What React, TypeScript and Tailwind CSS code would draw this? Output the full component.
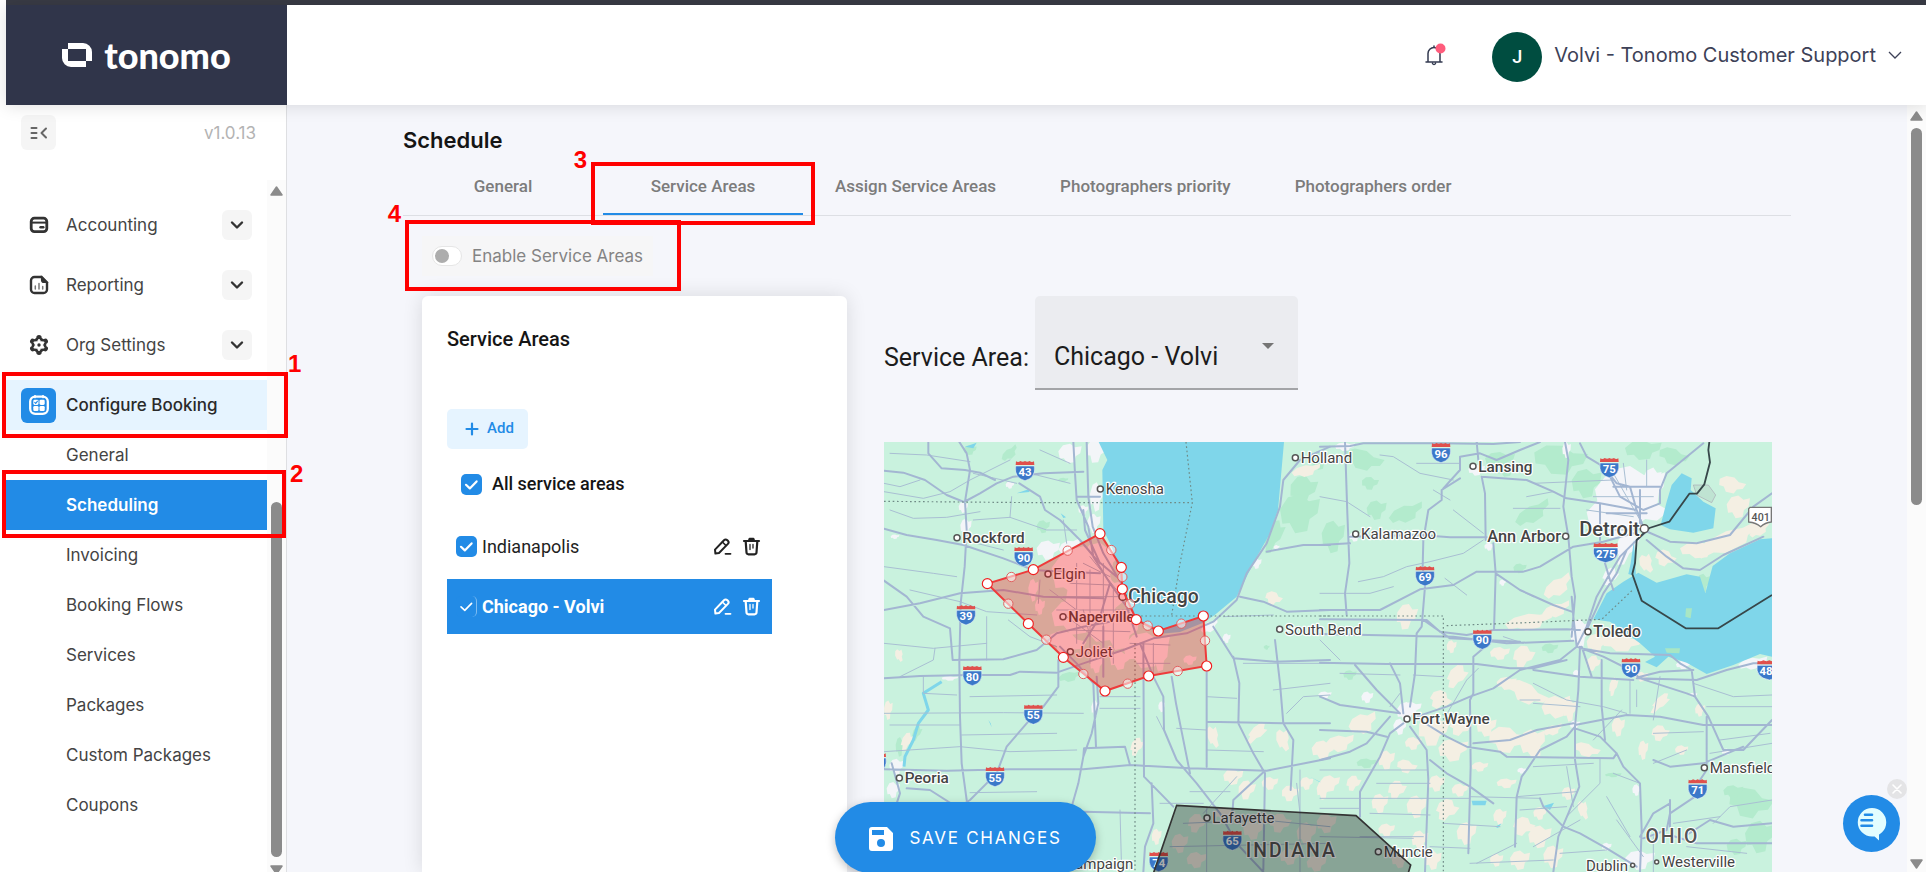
import React from "react";

const INTER = "font-['Inter',sans-serif]";

function Callout({ label, box, tag }: { label: string; box: string; tag: string }) {
  return (
    <span className={`pointer-events-none absolute z-30 border-4 border-[#ff0000] ${box}`}>
      <span className={`absolute font-['Liberation_Sans',sans-serif] text-2xl leading-6 font-bold text-[#ff0000] ${tag}`}>{label}</span>
    </span>
  );
}

function Tick({ id, checked, outline }: { id: string; checked?: boolean; outline?: boolean }) {
  return (
    <span className="grid size-[21px] shrink-0">
      <input
        id={id}
        type="checkbox"
        defaultChecked={checked}
        className={
          outline
            ? "col-start-1 row-start-1 size-[21px] appearance-none rounded-[5px] border-r border-[#7dbcf2] bg-[#228be6]"
            : "col-start-1 row-start-1 size-[21px] appearance-none rounded-[5px] bg-[#228be6]"
        }
      />
      <svg viewBox="0 0 21 21" className="pointer-events-none col-start-1 row-start-1 size-[21px]" fill="none" stroke="#fff" strokeWidth={outline ? 1.6 : 2.2} strokeLinecap="round" strokeLinejoin="round">
        <path d="M5 10.8 8.8 14.4 15.6 7.4" />
      </svg>
    </span>
  );
}

function AccountingIcon() {
  return (
    <svg viewBox="0 0 20 20" className="size-5" fill="none" stroke="#333" strokeWidth="2.800">
      <rect x="2.200" y="3.200" width="15.600" height="13.400" rx="3.200" />
      <path d="M2 7.600h16" strokeWidth="2" />
      <path d="M11.500 12.300h2.800" strokeWidth="2.400" strokeLinecap="round" />
    </svg>
  );
}

function ReportingIcon() {
  return (
    <svg viewBox="0 0 20 20" className="size-5" fill="none" stroke="#333" strokeWidth="2.400" strokeLinecap="round">
      <path d="M12.600 2H5.500A3.500 3.500 0 0 0 2 5.500v9A3.500 3.500 0 0 0 5.500 18h9a3.500 3.500 0 0 0 3.500-3.500V7.400Z" />
      <path d="M12.600 2v3a2.400 2.400 0 0 0 2.400 2.400h3L12.600 2Z" fill="#333" strokeWidth="1.400" />
      <path d="M6.300 14v-3M10 14V8.500M13.700 14v-2.500" strokeWidth="1.500" stroke="#777" />
    </svg>
  );
}

function SettingsIcon() {
  return (
    <svg viewBox="0 0 20 20" className="size-5" fill="#333">
      <circle cx="10" cy="10" r="7.400" />
      {[0, 60, 120, 180, 240, 300].map((a) => (
        <circle key={a} cx="10" cy="2.800" r="2.700" transform={`rotate(${a} 10 10)`} />
      ))}
      <path d="M10 4 11.800 6.700 15.200 7 13.700 10 15.200 13 11.800 13.300 10 16 8.200 13.300 4.800 13 6.300 10 4.800 7 8.200 6.700Z" fill="#fff" stroke="#fff" strokeWidth=".8" strokeLinejoin="round" />
      <circle cx="10" cy="10" r="1.700" />
    </svg>
  );
}

function BookingIcon() {
  return (
    <svg viewBox="0 0 20 20" className="size-5">
      <rect x="1.200" y="1.600" width="17.600" height="17.200" rx="5" fill="none" stroke="#fff" strokeWidth="2.300" />
      <path d="M6 .6v2M14 .6v2" stroke="#fff" strokeWidth="1.600" strokeLinecap="round" />
      <g fill="#fff">
        <rect x="4.300" y="4.700" width="5.200" height="5.200" rx="1.300" />
        <rect x="10.500" y="4.700" width="5.200" height="5.200" rx="1.300" />
        <rect x="4.300" y="10.900" width="5.200" height="5.200" rx="1.300" />
        <rect x="10.500" y="10.900" width="5.200" height="5.200" rx="1.300" />
      </g>
      <path d="m5.400 7.200 1.300 1.200 2-2.600" fill="none" stroke="#228be6" strokeWidth="1.100" />
    </svg>
  );
}

function Caret({ up }: { up?: boolean }) {
  return (
    <svg viewBox="0 0 13 10" className="h-2.5 w-[13px] shrink-0" fill="#8b8b8b" stroke="#8b8b8b" strokeWidth="1.500" strokeLinejoin="round">
      <path d={up ? "M6.500 1 12 9H1Z" : "M6.500 9 12 1H1Z"} />
    </svg>
  );
}

const sections = [
  { name: "Accounting", icon: <AccountingIcon /> },
  { name: "Reporting", icon: <ReportingIcon /> },
  { name: "Org Settings", icon: <SettingsIcon /> },
];
const bookingPages = ["General", "Scheduling", "Invoicing", "Booking Flows", "Services", "Packages", "Custom Packages", "Coupons"];

function Sidebar() {
  return (
    <aside className={`relative z-10 flex w-[281px] shrink-0 flex-col border-r border-[#dedfe2] bg-white text-[17px] text-[#444] ${INTER}`}>
      <div className="flex h-[75px] shrink-0 items-start justify-between pt-2.5 pr-[30px] pl-[15px]">
        <button aria-label="Collapse menu" className="grid size-[35px] place-items-center rounded-md bg-[#f5f5f5]">
          <svg viewBox="0 0 18 14" className="h-3.5 w-[18px]" fill="none" stroke="#666" strokeWidth="2" strokeLinecap="round" strokeLinejoin="round">
            <path d="M1.500 2h5M1.500 7h5M1.500 12h5M16 2.500 11.500 7 16 11.500" />
          </svg>
        </button>
        <span className="leading-9 text-[#b3b3b3]">v1.0.13</span>
      </div>
      <div className="flex min-h-0 flex-1">
        <nav className="flex flex-1 flex-col pt-5">
          {sections.map((s) => (
            <div key={s.name} className="mb-2.5 flex h-[50px] shrink-0 items-center pr-[15px] pl-[15px]">
              <a href="#" className="flex flex-1 items-center gap-2.5">
                <span className="grid size-[35px] place-items-center">{s.icon}</span>
                <span className="pt-0.5">{s.name}</span>
              </a>
              <button aria-label={`Expand ${s.name}`} className="grid size-[30px] place-items-center rounded-md bg-[#f5f5f5]">
                <svg viewBox="0 0 14 10" className="h-2.5 w-3.5" fill="none" stroke="#333" strokeWidth="2.400" strokeLinecap="round" strokeLinejoin="round">
                  <path d="m2 2.500 5 5 5-5" />
                </svg>
              </button>
            </div>
          ))}
          <a href="#" className="relative flex h-[50px] shrink-0 items-center gap-2.5 bg-[#e6f4ff] pl-[15px] font-medium text-[#2a2a2a]">
            <span className="grid size-[35px] place-items-center rounded-md bg-[#228be6]"><BookingIcon /></span>
            <span className="pt-0.5">Configure Booking</span>
            <Callout label="1" box="-left-1 -right-[21px] -top-2 -bottom-2" tag="left-full -top-6 ml-1" />
          </a>
          {bookingPages.map((p) =>
            p === "Scheduling" ? (
              <a key={p} href="#" className="relative flex h-[50px] shrink-0 items-center bg-[#228be6] pt-0.5 pl-[60px] font-semibold text-white">
                {p}
                <Callout label="2" box="-left-1 -right-[19px] -top-2.5 -bottom-2" tag="left-full -top-3 ml-2" />
              </a>
            ) : (
              <a key={p} href="#" className="flex h-[50px] shrink-0 items-center pt-0.5 pl-[60px]">{p}</a>
            )
          )}
        </nav>
        <div aria-hidden className="flex w-[19px] flex-col items-center bg-[#fbfbfb] pt-1.5">
          <Caret up />
          <div className="min-h-0 flex-[306]" />
          <div className="min-h-0 w-[11px] flex-[355] rounded-full bg-[#8b8b8b]" />
          <div className="h-2 shrink-0" />
          <div className="h-[7px] shrink-0 overflow-hidden"><Caret /></div>
        </div>
      </div>
    </aside>
  );
}

function Header() {
  return (
    <header className={`relative z-20 flex h-[100px] shrink-0 items-center bg-white shadow-[0_1px_16px_rgba(0,0,0,0.13)] ${INTER}`}>
      <a href="#" className="flex h-full w-[281px] shrink-0 items-center justify-center gap-3 bg-[#30354a] text-white">
        <svg viewBox="0 0 30 24" className="h-6 w-[30px]" fill="#fff">
          <path d="M6 0h15a9 9 0 0 1 9 9v9h-6V6H6Z" />
          <path d="M0 6h6v12h18v6H9a9 9 0 0 1-9-9Z" />
        </svg>
        <span className="font-['Lato',sans-serif] text-4xl leading-10 font-black">tonomo</span>
      </a>
      <div className="flex flex-1 items-center justify-end pr-6">
        <button aria-label="Notifications" className="mr-[46px]">
          <svg viewBox="0 0 22 24" className="h-6 w-[22px]" fill="none" stroke="#333a50" strokeWidth="1.500" strokeLinejoin="round" strokeLinecap="round">
            <path d="M2 19h16M4 19v-8.500a6 6 0 0 1 12 0V19M10 4.500V3M8.500 20.500a1.700 1.700 0 0 0 3 0" />
            <circle cx="16.500" cy="5.500" r="5" fill="#ff5c7c" stroke="none" />
          </svg>
        </button>
        <button className="flex items-center gap-3 text-xl text-[#3d4157]">
          <span className="mt-1 grid size-[50px] place-items-center rounded-full bg-[#004d40] font-['Roboto',sans-serif] text-lg font-medium text-white">J</span>
          Volvi - Tonomo Customer Support
          <svg viewBox="0 0 14 10" className="h-2.5 w-3.5" fill="none" stroke="#3d4157" strokeWidth="1.300">
            <path d="m1 2 6 6 6-6" />
          </svg>
        </button>
      </div>
    </header>
  );
}

function RowIcons({ area }: { area: string }) {
  return (
    <span className="ml-auto flex items-center gap-2.5 pr-[11px]">
      <button aria-label={`Edit ${area}`}>
        <svg viewBox="0 0 19 19" className="size-[19px]" fill="none" stroke="currentColor" strokeWidth="2" strokeLinejoin="round" strokeLinecap="round">
          <path d="M2 12.600 11 3.200a2.300 2.300 0 0 1 3.300 0l.6.6a2.200 2.200 0 0 1 0 3.100L6 16l-3.600.6Z" />
          <path d="m9.400 5 3.400 3.400" strokeWidth="1.500" />
          <path d="M12.500 16.800h5" strokeWidth="1.800" />
        </svg>
      </button>
      <button aria-label={`Delete ${area}`}>
        <svg viewBox="0 0 19 19" className="size-[19px]" fill="none" stroke="currentColor" strokeWidth="2.200" strokeLinejoin="round" strokeLinecap="round">
          <path d="M2 4h15M7 3.500 7.600 1.800h3.800l.6 1.700M3.700 4.500l.8 11a2 2 0 0 0 2 1.800h6a2 2 0 0 0 2-1.800l.8-11" />
          <path d="M8 7.500v5M11 7.500v3.500" strokeWidth="1.300" />
        </svg>
      </button>
    </span>
  );
}

/* ---- map ---- */

const BLOB = "M-50 -10-30-40 0-48 22-30 50-36 44 0 24 14 18 44-12 50-26 24-44 26Z";
// x, y, width, height, rotation
type Blob = [number, number, number, number, number];
const eastSand: Blob[] = [
  [1235, 165, 80, 50, 20], [1255, 230, 70, 70, 0], [1230, 330, 230, 60, -24], [1140, 360, 120, 50, 0], [980, 400, 40, 60, -30], [1035, 385, 60, 50, 30], [1320, 300, 70, 30, -30],
  [715, 470, 100, 50, -35], [260, 560, 60, 80, 10], [630, 575, 150, 50, -10], [710, 540, 90, 40, -20], [905, 640, 120, 50, 5], [395, 650, 30, 40, 0], [830, 640, 60, 60, 0],
  [610, 680, 60, 70, 20], [540, 670, 60, 40, 0], [410, 740, 50, 80, 30], [360, 810, 60, 60, 40], [620, 790, 130, 60, 30], [710, 830, 90, 70, -10], [560, 760, 60, 40, 0], [820, 700, 40, 50, 20],
  [880, 770, 24, 60, 10], [895, 890, 40, 60, 0], [965, 740, 40, 30, 0], [1020, 820, 30, 80, 40], [130, 880, 90, 60, -20], [60, 940, 90, 50, -10], [340, 900, 90, 100, 10], [400, 960, 90, 70, 0], [500, 890, 60, 60, 0],
  [560, 930, 110, 80, 15], [640, 940, 80, 90, -10], [420, 890, 60, 60, 30], [200, 990, 50, 60, 0], [260, 1010, 60, 40, 20], [280, 940, 50, 40, 0], [700, 900, 60, 30, -20], [750, 840, 40, 70, 0], [800, 960, 80, 40, 20],
  [970, 960, 30, 60, 0], [1085, 960, 40, 30, 0], [1020, 910, 50, 50, 20], [30, 1060, 60, 50, 0], [100, 1060, 40, 50, 20], [180, 1120, 50, 60, 0], [230, 1080, 50, 60, 20], [290, 1130, 60, 70, 0], [350, 1060, 50, 50, 0],
  [380, 1140, 60, 70, 30], [440, 1210, 60, 70, 0], [300, 1230, 50, 60, 0], [200, 1200, 50, 40, 0], [240, 1290, 50, 50, 0], [340, 1290, 50, 60, 0], [420, 1080, 50, 40, 0], [540, 1160, 40, 50, 0], [610, 1190, 60, 60, 30],
  [660, 1220, 70, 70, 0], [700, 1280, 60, 70, 0], [600, 1290, 60, 60, 0], [790, 1140, 30, 60, -20], [745, 1090, 40, 40, 0], [530, 1290, 40, 40, 0], [660, 1150, 40, 40, 0], [1140, 840, 30, 40, 0], [480, 1010, 50, 30, 0], [560, 1060, 60, 30, 0],
];
const westSand: Blob[] = [
  [1310, 122, 90, 34, -12], [88, 676, 24, 40, -20], [55, 840, 26, 60, 0], [110, 935, 30, 60, 20], [1210, 505, 50, 40, 30], [1030, 920, 34, 70, -20], [800, 950, 34, 60, 20], [1160, 910, 36, 80, 40], [1240, 930, 40, 70, -20],
  [1360, 960, 70, 60, 0], [1090, 1040, 60, 50, 0], [1130, 1080, 50, 60, 10], [1200, 1060, 50, 40, 0], [1260, 1090, 50, 50, 10], [1310, 1060, 40, 40, 0], [1360, 1080, 40, 60, 0], [980, 1180, 50, 60, 20], [930, 1240, 50, 60, 0],
  [1060, 1150, 50, 40, 0], [1150, 1200, 60, 60, 0], [1230, 1180, 60, 60, 20], [1310, 1210, 60, 70, 0], [1370, 1180, 60, 60, 0], [980, 1290, 60, 50, 0], [1260, 1280, 60, 50, 0], [1340, 1300, 60, 50, 0], [860, 1220, 30, 50, 0],
];
const eastWoods: Blob[] = [
  [130, 90, 120, 60, 20], [150, 160, 50, 40, 10], [260, 250, 110, 50, -20], [40, 320, 70, 100, 0], [170, 240, 60, 60, 0], [640, 250, 120, 50, -30], [720, 90, 160, 90, 10], [540, 90, 90, 50, 0], [800, 160, 90, 90, 0], [600, 415, 40, 30, 0],
  [90, 735, 40, 30, 0], [690, 655, 50, 30, 0], [560, 120, 60, 40, 0], [970, 60, 110, 60, 0], [1060, 80, 90, 50, 20], [1290, 1120, 130, 90, 20], [1240, 1085, 60, 40, 0], [1320, 1220, 90, 100, 0], [1250, 1250, 60, 50, 0], [880, 1035, 50, 14, 0], [140, 1000, 60, 30, 0], [1150, 460, 40, 60, 0],
];
const westWoods: Blob[] = [
  [420, 70, 60, 30, -40], [300, 60, 40, 30, 0], [1300, 180, 80, 90, 10], [1290, 250, 120, 120, 0], [1210, 320, 50, 110, 20], [600, 740, 70, 30, -10], [90, 950, 26, 60, 0], [580, 150, 30, 14, 0], [1190, 652, 18, 14, 0], [140, 910, 24, 50, 20], [520, 290, 40, 40, 0], [1350, 90, 50, 60, 0],
];
const westTown: Blob[] = [
  [600, 70, 70, 60, 0], [680, 60, 60, 80, 10], [680, 200, 40, 90, 0], [672, 280, 40, 60, 0], [535, 360, 70, 60, 0], [600, 350, 70, 40, -20], [288, 290, 34, 50, 0], [280, 232, 28, 34, 0], [420, 165, 26, 22, 0], [240, 745, 50, 14, 0], [676, 835, 24, 50, 0],
  [80, 1010, 44, 50, 0], [70, 1080, 40, 50, 0], [1020, 590, 60, 30, -30], [75, 320, 26, 14, 0], [875, 830, 20, 34, 0], [1160, 400, 30, 34, 0], [1220, 352, 18, 14, 0], [1070, 625, 24, 30, 0], [640, 240, 30, 30, 0], [1362, 798, 26, 14, 0],
];
const eastTown: Blob[] = [
  [930, 180, 190, 150, 0], [890, 260, 180, 130, 0], [1000, 170, 70, 120, 0], [960, 230, 150, 130, 40], [900, 190, 150, 120, 0], [920, 350, 60, 120, 20], [870, 440, 40, 60, 30], [780, 610, 60, 90, 0], [260, 845, 60, 60, 0], [240, 890, 40, 50, 0], [275, 835, 60, 40, 0], [142, 802, 36, 36, 0], [105, 320, 36, 30, 0], [470, 120, 50, 34, 0],
  [75, 50, 60, 26, 0], [508, 350, 30, 24, 0], [765, 885, 30, 30, 0], [1300, 700, 90, 36, -10], [1090, 705, 44, 26, 0], [548, 458, 20, 20, 0], [950, 1080, 26, 36, 0], [960, 1290, 90, 60, 0], [860, 1250, 30, 24, 0], [1220, 965, 30, 20, 0], [605, 1022, 26, 18, 0], [770, 730, 22, 22, 0], [740, 60, 26, 50, 0], [1120, 795, 24, 14, 0], [15, 795, 40, 22, 0],
];
const chicagoTown: Blob[] = [
  [640, 430, 190, 170, 0], [700, 510, 150, 170, 0], [620, 560, 150, 110, 0], [750, 600, 120, 120, 0], [830, 660, 140, 110, 0], [690, 390, 110, 110, 0], [590, 640, 110, 70, 20], [870, 680, 50, 90, 0], [490, 480, 30, 70, 0], [960, 690, 40, 30, 0], [680, 700, 40, 60, 0], [750, 690, 60, 60, 0], [510, 530, 30, 50, 0], [660, 480, 200, 180, 40], [700, 580, 180, 110, 0],
];

function Blobs({ items, fill }: { items: Blob[]; fill: string }) {
  return (
    <g fill={fill}>
      {items.map(([x, y, w, h, r], i) => (
        <path key={i} d={BLOB} transform={`translate(${x} ${y}) rotate(${r}) scale(${w / 100} ${h / 100})`} />
      ))}
    </g>
  );
}

const westMajor = [
  "M42 122 100 128 165 150 230 195 282 216 330 190 380 160 430 140 520 130 640 125",
  "M175 36V70L215 115 285 120 330 128 375 150M268 36 290 70 300 120 285 215 290 300 284 410 272 520 268 700 270 860 275 1000 290 1110",
  "M42 296 110 315 200 330 280 345 400 385 490 420 580 425 690 430M42 452 110 500 160 560 240 595 248 690 400 688 500 660 560 610 640 590 720 575",
  "M42 745 150 738 300 735 420 735 450 725 560 728 640 700 760 660 850 625 950 610 1030 575 1100 510 1130 430 1190 340 1230 230 1240 150 1290 90 1380 50",
  "M42 540 150 520 270 490 400 480 520 500 700 505M448 160 510 200 525 240 570 270 630 330 680 390 740 440",
  "M610 36 615 130 620 210 655 290 670 380 720 460 770 530 800 620M650 36 655 200 668 290 700 370 760 470M640 240 645 300 690 400",
  "M565 690 565 770 520 830 470 880 410 950 380 1030 300 1110 220 1160M680 740 685 820 665 910 640 980 625 1060 605 1130M570 650 620 700 670 760 678 950",
  "M42 1018 230 1022 420 1018 640 1018 780 1005 960 1015 1190 1022 1380 985M110 1075 180 1080 290 1150M65 1000 90 1090 80 1120",
  "M820 640 822 1040 910 1130M810 640 850 740 880 800 882 900 920 990 980 1060 1050 1150 1100 1240 1180 1326M1010 710V1010M905 740 918 820 960 1030",
  "M1090 680 1108 760 1105 880 1150 970 1185 1030 1180 1320M1215 630 1230 760 1240 880 1270 930 1262 1080M1030 590 1090 685 1215 695 1380 690",
  "M1110 500 1180 515 1250 545 1380 540M1190 365 1300 345 1380 345M1010 875 1240 880 1380 880M845 1060 850 1180 825 1250 820 1326M1185 1022 1090 1110 1085 1180",
  "M640 1145 840 1150M640 980 642 955 765 950 780 1005M620 200H690M700 590V740M720 460 690 560 640 640",
];
const westMinor = [
  "M60 70 170 75 300 95M42 185 160 205 240 185 300 150 420 90M310 130 440 160M60 240 130 265 230 262 330 245M42 160 90 170 150 150M310 270 420 262 530 300 620 300M425 200 420 262",
  "M42 410 190 430 260 440M320 340 400 360M120 480 270 515 350 545 500 555M42 640 190 655 350 640M195 655 190 690 90 740M160 740 160 790 260 795M60 885 270 885M42 850 400 848 640 850M275 915 560 910",
  "M42 965 270 950 420 965 620 960M300 1088 500 1085M300 800 560 795M350 560V690M415 570 480 620 560 650M510 450 505 520M580 270 590 340M480 130 600 160M510 60 600 100M690 800 810 800M690 835 810 835M750 1140 755 1326M780 1005 840 1008",
  "M1010 800 1100 805M1060 560 1210 555M920 895 1010 900M1010 960 1180 965M1120 700 1380 700M1250 850 1300 800 1380 795M960 1085 1080 1085M1100 1040 1000 1150M1280 1060 1290 1150M1210 780 1380 760M860 860 880 900M870 1120 1000 1120M940 1180 1180 1170 1380 1190M900 1250 1380 1240M1290 1020V1326M1010 1130V1326",
  "M580 500H760M560 540H780M600 460 720 465M620 400V640M660 420V700M700 400V740M730 480V700M600 600 780 605M780 640 900 645M850 640V740M590 560 700 640M540 480 620 540M660 380 740 480M640 400 720 440M800 700H900M640 540 660 620",
];
const eastMajor = [
  "M0 50 90 48 130 40 360 40 520 42 600 36M75 36 82 250 88 400 75 490 80 555M370 175 420 120 420 80 480 70 530 90 600 60 660 36M485 140 620 150 700 185 740 205 840 220 950 240M485 140 495 190 497 330M470 36 475 90",
  "M420 145 365 180 365 210 325 240 310 330 308 410 315 470 305 590 290 610 285 730 270 830M0 540 180 540 300 478 400 465 470 425 610 425 660 410 760 350 850 335 940 310M0 345 90 340M90 320 300 315 390 322 500 322",
  "M520 340 527 430 522 600M527 430 600 480 700 525 755 545M735 36 745 90 730 230 745 320 755 440 765 500 755 620M780 40 800 80 850 110 890 160 930 170 950 240 970 290M840 220V330M870 140 900 200 970 240 1020 220 1020 180 1040 130 1150 40",
  "M985 300 940 340 900 380 870 430 830 500 800 590 770 650M920 360 890 430 850 490 800 600M970 300 1050 335 1130 340 1230 315 1300 230 1356 190M980 330 1040 380 1090 415 1140 420 1210 375 1330 320M855 400 870 450 880 480",
  "M0 568 320 570 360 605 440 615 520 600 740 598 780 600M0 612 400 620 560 640 760 632M770 650 720 690 600 720 520 775 450 800 380 830 290 860M770 650 850 680 930 720 960 745 1100 790 1125 800M780 655 870 670 1050 675 1080 700",
  "M310 570 390 625 600 635M0 698 200 702 470 702 570 715 640 715 740 690M105 705 170 780 240 850M210 700 240 760 250 850M0 800 60 825 240 850M490 655 460 680 460 790 450 810 452 1010 445 1270",
  "M780 650 775 780 765 890 765 990 778 1070 745 1150 715 1220 700 1326M765 890 740 920 660 960 620 1020 605 1040 590 1100 585 1250M765 895 840 920 890 970 910 1010 960 1060 965 1200 960 1326M845 690 845 830 855 930",
  "M250 880 210 910 180 980 120 1085 120 1160M270 890 320 960 325 1050 315 1326M0 990 90 965 140 940 210 860M300 870 380 920 440 950 540 965 560 980 880 985 890 970M330 990 380 1030 450 1070 520 1120",
  "M950 745 1130 750 1220 720 1300 700 1356 700M960 740 1020 725 1120 720M1080 700 1115 720 1125 800 1165 860 1210 960 1270 960 1356 870M1160 860V1020L1140 1050M1125 1100 1050 1150 1040 1200 970 1225M1050 1110V1190M1000 990 1050 1010 1150 1000 1270 950",
  "M640 720 780 740 940 750M460 940 570 930 650 900 760 880M765 885 920 855 1020 860 1150 885 1356 885M0 900 140 905 200 920M660 1105 670 1130 730 1190 780 1210 860 1255 950 1310M960 1220 1000 1150 1050 1120",
  "M770 650 760 560 755 500M785 650 815 740M1100 1215 1170 1170 1240 1190 1356 1180M1050 1215 1130 1240 1356 1240M880 170H1020M860 250H980M960 180V290",
];
const eastMinor = [
  "M0 200 80 215 150 260M180 75 220 80 300 130 400 150M290 100 420 100M340 180 390 210M0 490 150 490 220 470M115 455 190 440 260 410 330 395 430 370 490 330M375 445 440 495M240 790 210 830M400 240 490 310",
  "M580 235 720 235M640 160 880 150M700 185 620 200M600 480 640 500M550 620 610 640M640 760 720 800 740 810 850 830 920 850M600 810 660 810M475 715 440 750 370 870M280 735 370 740M780 830 640 820M1020 740 1000 870M950 780V830",
  "M0 630 60 690M60 730 240 735M0 1020 150 1020 320 1020M170 1060H330M0 1105H450M450 1100 660 1105M150 1150 330 1155M0 1135H120M590 1100 770 1085M600 1140 740 1130M640 1010 820 1000M840 985V1060L740 1160M880 1030 960 1060M450 1300 700 1290",
  "M330 1250 450 1255M120 1220H310M0 1220 280 1225M370 1180 540 1190M720 1270 860 1260M860 1100 930 1220M905 840 820 930M1000 910 1150 905M930 750 930 850M1120 760 1240 800 1356 795M1160 830 1356 830M1200 930 1350 910M1170 970 1356 940M1000 1000 1100 960",
  "M800 240 940 260M820 200H1000M800 300H960M880 130 960 270M910 100 920 180M980 90V170M740 1010 760 1130M1060 1180 1200 1160M1100 1250 1280 1270M1180 1180 1230 1130 1356 1110M1000 1220V1326M890 1170 970 1280M780 1170 640 1250M590 1240 470 1300",
];

function Roads({ major, minor }: { major: string[]; minor: string[] }) {
  return (
    <g fill="none" strokeLinejoin="round" strokeLinecap="round">
      <path d={minor.join("")} stroke="#a9bfd3" strokeWidth="3" />
      <path d={major.join("")} stroke="#a3b6d2" strokeWidth="6" />
    </g>
  );
}

function Shield({ x, y, n, wide }: { x: number; y: number; n?: string; wide?: boolean }) {
  return (
    <g transform={`translate(${x} ${y})`}>
      <g transform={wide ? "scale(1.3 1)" : undefined}>
        <path d="M-27-28Q-20-24-14-29-6-24 0-29 6-24 14-29 20-24 27-28L28-17H-28Z" fill="#e0504c" />
        <path d="M-28-14H28Q33 22 0 30-33 22-28-14Z" fill="#3b78c9" stroke="#fff" strokeWidth="1.500" />
      </g>
      {n && <text y="15" textAnchor="middle" fill="#fff" fontSize="34" fontWeight="700">{n}</text>}
    </g>
  );
}

interface Place { x: number; y: number; name: string; size: number; heavy?: boolean; left?: boolean; r?: number }

function City({ x, y, name, size, heavy, left, r = 9 }: Place) {
  return (
    <g>
      <circle cx={x} cy={y} r={r} fill="#fff" stroke="#555" strokeWidth="4.500" />
      <text x={left ? x - 14 : x + 16} y={y + size * 0.35} textAnchor={left ? "end" : "start"} fontSize={size} fontWeight={heavy ? 500 : 400} fill="#444" stroke="#fff" strokeWidth="7" strokeLinejoin="round" paintOrder="stroke">
        {name}
      </text>
    </g>
  );
}

const westCities: Place[] = [
  { x: 691, y: 177, name: "Kenosha", size: 45 },
  { x: 261, y: 323, name: "Rockford", size: 46, heavy: true },
  { x: 1276, y: 83, name: "Holland", size: 45 },
  { x: 534, y: 432, name: "Elgin", size: 45 },
  { x: 579, y: 560, name: "Naperville", size: 44, heavy: true },
  { x: 601, y: 665, name: "Joliet", size: 45 },
  { x: 758, y: 500, name: "Chicago", size: 58, heavy: true, r: 11 },
  { x: 1229, y: 598, name: "South Bend", size: 45 },
  { x: 88, y: 1044, name: "Peoria", size: 46, heavy: true },
  { x: 1011, y: 1164, name: "Lafayette", size: 45 },
];
const eastCities: Place[] = [
  { x: 459, y: 109, name: "Lansing", size: 46, heavy: true },
  { x: 107, y: 312, name: "Kalamazoo", size: 45 },
  { x: 737, y: 319, name: "Ann Arbor", size: 49, heavy: true, left: true },
  { x: 973, y: 296, name: "Detroit", size: 60, heavy: true, left: true, r: 12 },
  { x: 804, y: 605, name: "Toledo", size: 47, heavy: true },
  { x: 261, y: 867, name: "Fort Wayne", size: 46, heavy: true },
  { x: 1153, y: 1013, name: "Mansfield", size: 45 },
  { x: 175, y: 1265, name: "Muncie", size: 45 },
  { x: 938, y: 1306, name: "Dublin", size: 45, left: true, r: 6 },
  { x: 1010, y: 1296, name: "Westerville", size: 45, r: 6 },
];

const corners = [[352, 461], [490, 419], [690, 311], [754, 412], [757, 477], [799, 569], [865, 603], [1000, 558], [1010, 708], [836, 738], [705, 783], [580, 682], [475, 581]];
const handles = [[424, 441], [593, 362], [724, 360], [757, 441], [780, 522], [833, 587], [934, 581], [1005, 632], [923, 723], [773, 761], [640, 732], [529, 629], [415, 521]];

function RegionMap() {
  return (
    <svg role="img" aria-label="Service area map" viewBox="0 0 2664 1290" preserveAspectRatio="xMinYMin slice" className="block h-full w-full bg-[#c9f2de] font-['Roboto',sans-serif]">
      <g transform="translate(-42 -36)">
        <Blobs items={westWoods} fill="#b3ebcd" />
        <Blobs items={westSand} fill="#f4efe3" />
        <Blobs items={westTown} fill="#f3f5f8" />
        <Blobs items={chicagoTown} fill="#f8f7fa" />
        <path d="M686 36 712 90 697 120 700 300 725 350 745 420 760 490 785 545 815 580 865 612 930 606 1000 578 1035 554 1100 500 1150 400 1200 310 1224 240 1242 36Z" fill="#7fd6ea" />
        <path d="M215 755 160 790 175 840 145 880 130 930 105 980 102 1010" fill="none" stroke="#7fd6ea" strokeWidth="9" strokeLinejoin="round" />
        <path d="M285 50 320 38 310 55ZM440 190 480 176 478 186ZM355 870 365 892 362 880ZM572 250 588 262 580 264ZM1320 1040 1350 1055 1370 1045 1355 1060Z" fill="#7fd6ea" />
      </g>
      <g transform="translate(1308 -36)">
        <Blobs items={eastWoods} fill="#b3ebcd" />
        <Blobs items={eastSand} fill="#f4efe3" />
        <Blobs items={eastTown} fill="#f4f5f9" />
        <path d="M820 568 860 490 910 455 955 428 1010 458 1100 433 1140 440 1156 490 1178 408 1230 370 1320 328 1356 325V680L1320 672 1240 705 1160 732 1100 698 1045 680 1010 712 975 696 1005 680 960 640 905 600 870 575Z" fill="#7fd6ea" />
        <path d="M1085 130 1115 145 1112 180 1150 215 1187 235 1180 295 1120 308 1050 298 1022 285 1040 215 1055 165Z" fill="#7fd6ea" />
        <path d="M942 330 932 400 925 432 948 440ZM455 1112 500 1112 496 1126 458 1126ZM670 1128 702 1118 690 1140ZM525 1190 545 1180 534 1194Z" fill="#7fd6ea" />
        <path d="M1035 655 1080 655 1078 670 1040 668ZM1098 535 1116 535 1112 565 1096 560Z" fill="#a8e6c4" />
        <path d="M1120 165 1165 165 1187 195 1175 218 1130 195Z" fill="#bfe3d2" stroke="#a9a9b5" strokeWidth="2" />
      </g>
      <g transform="translate(-42 -36)"><Roads major={westMajor} minor={westMinor} /></g>
      <g transform="translate(1308 -36)"><Roads major={eastMajor} minor={eastMinor} /></g>
      <g transform="translate(-42 -36)" fill="none" stroke="#6f8a86" strokeWidth="3.500" strokeDasharray="5 8">
        <path d="M42 214 500 218 967 218M948 36 967 218 930 400 905 556M800 558 1380 558M795 640V1326" />
      </g>
      <g transform="translate(1308 -36)" fill="none">
        <path d="M0 558H370V1326M380 587 620 578 845 568 940 478" stroke="#6f8a86" strokeWidth="3.500" strokeDasharray="5 8" />
        <path d="M1168 36 1165 60 1170 97 1153 163 1131 191 1108 191 1048 275 988 294 950 330 945 400 937 432 965 512 1097 595H1195L1356 495" stroke="#37474a" strokeWidth="5.500" strokeLinejoin="round" />
      </g>
      <g transform="translate(-42 -36)">
        {westCities.map((c) => <City key={c.name} {...c} />)}
        <text x="790" y="1316" textAnchor="end" fontSize="45" fill="#444" stroke="#fff" strokeWidth="7" paintOrder="stroke">Champaign</text>
        <Shield x={465} y={122} n="43" />
        <Shield x={461} y={380} n="90" />
        <Shield x={288} y={555} n="39" />
        <Shield x={307} y={737} n="80" />
        <Shield x={490} y={853} n="55" />
        <Shield x={375} y={1040} n="55" />
        <Shield x={20} y={998} />
        <Shield x={866} y={1295} n="74" />
        <Shield x={1087} y={1231} n="65" />
      </g>
      <g transform="translate(1308 -36)">
        {eastCities.map((c) => <City key={c.name} {...c} />)}
        <Shield x={363} y={68} n="96" />
        <Shield x={868} y={113} n="75" />
        <Shield x={857} y={368} n="275" wide />
        <Shield x={315} y={438} n="69" />
        <Shield x={487} y={628} n="90" />
        <Shield x={933} y={714} n="90" />
        <Shield x={1348} y={720} n="480" wide />
        <Shield x={1133} y={1077} n="71" />
        <path d="M1290 232H1354V276Q1335 278 1322 290 1308 278 1286 276V236Z" fill="#fff" stroke="#777" strokeWidth="4" />
        <text x="1322" y="272" textAnchor="middle" fontSize="32" fontWeight="500" fill="#555">401</text>
        <text x="1057" y="1240" textAnchor="middle" fontSize="58" fontWeight="500" letterSpacing="6" fill="#555" stroke="#fff" strokeWidth="6" paintOrder="stroke">OHIO</text>
        <text x="-86" y="1282" textAnchor="middle" fontSize="58" fontWeight="500" letterSpacing="6" fill="#555" stroke="#fff" strokeWidth="6" paintOrder="stroke">INDIANA</text>
      </g>
      <g transform="translate(-42 -36)">
        <path d="M845 1345 920 1126 1458 1157 1622 1305 1610 1345Z" fill="#000" fillOpacity=".32" stroke="#333" strokeWidth="5" />
        <polygon points={corners.map((p) => p.join(",")).join(" ")} fill="#ff0000" fillOpacity=".31" stroke="#ee3b3b" strokeWidth="6" />
        {handles.map(([x, y]) => <circle key={`${x}-${y}`} cx={x} cy={y} r="14" fill="#fff" fillOpacity=".55" stroke="#e26060" strokeWidth="3" />)}
        {corners.map(([x, y]) => <circle key={`${x}-${y}`} cx={x} cy={y} r="15" fill="#fff" stroke="#f01f1f" strokeWidth="3.500" />)}
      </g>
    </svg>
  );
}

const tabs = ["General", "Service Areas", "Assign Service Areas", "Photographers priority", "Photographers order"];

function Schedule() {
  return (
    <main className="flex min-w-0 flex-1 bg-[#f5f6fb]">
      <div className="flex min-w-0 flex-1 flex-col overflow-hidden px-10 pt-5">
        <div className="mx-auto flex min-h-0 w-full max-w-[1388px] flex-1 flex-col">
          <h1 className={`text-[22px] leading-[30px] font-semibold text-[#151515] ${INTER}`}>Schedule</h1>
          <div role="tablist" className="mt-[5px] flex h-14 shrink-0 border-b border-[#dddfe4] font-['Roboto',sans-serif] text-[17px] font-medium text-[#7c7c7c]">
            {tabs.map((t) =>
              t === "Service Areas" ? (
                <button key={t} role="tab" aria-selected className="relative flex min-w-[200px] items-center justify-center border-b-2 border-[#228be6] px-8">
                  {t}
                  <Callout label="3" box="-inset-x-3 top-0.5 -bottom-3" tag="right-full -top-[18px] mr-2" />
                </button>
              ) : (
                <button key={t} role="tab" className="flex min-w-[200px] items-center justify-center px-8 pb-0.5">{t}</button>
              )
            )}
          </div>
          <div className="flex shrink-0 px-[19px] pt-5">
            <label htmlFor="enable-areas" className={`relative flex h-10 items-center gap-2.5 bg-[#f6f6f7] px-2.5 text-[17px] text-[#848484] ${INTER}`}>
              <input
                id="enable-areas"
                type="checkbox"
                role="switch"
                className="h-5 w-[30px] appearance-none rounded-full border border-[#e6e6e6] bg-white p-0.5 before:block before:size-3.5 before:rounded-full before:bg-[#adadad] checked:before:ml-2.5"
              />
              <span className="pt-0.5">Enable Service Areas</span>
              <Callout label="4" box="-left-[17px] -right-7 -top-4 -bottom-[15px]" tag="right-full -top-[22px] mr-2" />
            </label>
          </div>
          <div className="mt-5 flex min-h-0 flex-1 gap-[37px] px-[19px] font-['Roboto',sans-serif]">
            <section className="flex w-[425px] shrink-0 flex-col rounded-t-md bg-white pt-[30px] pr-[75px] pl-[25px] text-lg text-[#222] shadow-[0_0_20px_rgba(0,0,0,0.12)]">
              <h2 className="text-xl leading-[26px] font-medium text-[#151515]">Service Areas</h2>
              <button className="mt-[57px] flex h-10 items-center gap-2 self-start rounded-[5px] bg-[#e6f4ff] pr-3.5 pl-[18px] text-[15px] font-medium text-[#228be6]">
                <svg viewBox="0 0 14 14" className="size-3.5" stroke="#228be6" strokeWidth="2.200" strokeLinecap="round"><path d="M7 1.500v11M1.500 7h11" /></svg>
                Add
              </button>
              <label htmlFor="all-areas" className="mt-5 flex h-[30px] items-center gap-2.5 pl-3.5 font-medium text-[#151515]">
                <Tick id="all-areas" checked />
                All service areas
              </label>
              <div className="mt-5 flex h-[55px] w-[325px] items-center pl-[9px]">
                <label htmlFor="indianapolis" className="flex items-center gap-[5px]">
                  <Tick id="indianapolis" checked />
                  Indianapolis
                </label>
                <RowIcons area="Indianapolis" />
              </div>
              <div className="mt-[5px] flex h-[55px] w-[325px] items-center bg-[#228be6] pl-[9px] font-bold text-white">
                <label htmlFor="chicago" className="flex items-center gap-[5px]">
                  <Tick id="chicago" checked outline />
                  Chicago - Volvi
                </label>
                <RowIcons area="Chicago - Volvi" />
              </div>
            </section>
            <section className="flex min-w-0 flex-1 flex-col">
              <div className="flex shrink-0 items-end gap-1.5 text-[25px] leading-[30px] text-[#1c1c1c]">
                <label htmlFor="service-area" className="pb-[17px]">Service Area:</label>
                <span className="grid w-[263px] items-center">
                  <select id="service-area" className="col-start-1 row-start-1 h-[94px] appearance-none rounded-t-[5px] border-b-2 border-[#a3a4a7] bg-[#ebecf0] pt-[30px] pr-12 pl-[19px]">
                    <option>Chicago - Volvi</option>
                    <option>Indianapolis</option>
                  </select>
                  <svg viewBox="0 0 12 6" className="pointer-events-none col-start-1 row-start-1 mt-1.5 mr-6 h-1.5 w-3 justify-self-end" fill="#757575"><path d="M0 0h12L6 6Z" /></svg>
                </span>
              </div>
              <div className="mt-[52px] min-h-0 flex-1 overflow-hidden"><RegionMap /></div>
            </section>
          </div>
        </div>
      </div>
      <div aria-hidden className="flex w-[19px] shrink-0 flex-col items-center bg-[#fbfbfb] pt-1.5">
        <Caret up />
        <div className="h-[7px] shrink-0" />
        <div className="min-h-0 w-[11px] flex-[378] rounded-full bg-[#8b8b8b]" />
        <div className="min-h-0 flex-[354]" />
        <Caret />
        <div className="h-[3px] shrink-0" />
      </div>
    </main>
  );
}

export default function App() {
  return (
    <div className="relative flex h-screen flex-col overflow-hidden bg-white pl-1.5">
      <div className="h-[5px] shrink-0 bg-[#393b45]" />
      <Header />
      <div className="flex min-h-0 flex-1">
        <Sidebar />
        <Schedule />
      </div>
      <button className={`absolute -bottom-px left-1/2 z-20 flex h-[71px] w-[261px] -translate-x-32 items-center justify-center gap-4 rounded-full bg-[#228be6] pt-0.5 text-[17px] tracking-widest text-white shadow-[0_3px_10px_rgba(0,0,0,0.25)] ${INTER}`}>
        <svg viewBox="0 0 24 24" className="size-6" fillRule="evenodd" fill="#fff">
          <path d="M3 0h15l6 6v15a3 3 0 0 1-3 3H3a3 3 0 0 1-3-3V3a3 3 0 0 1 3-3Zm0 3v5h12V3Zm9 9a4 4 0 1 0 0 8 4 4 0 0 0 0-8Z" />
        </svg>
        SAVE CHANGES
      </button>
      <div className="absolute right-[26px] bottom-5 z-20">
        <button aria-label="Open chat" className="grid size-[57px] place-items-center rounded-full bg-[#228be6]">
          <svg viewBox="0 0 30 34" className="h-[34px] w-[30px]">
            <path d="M15 1a14 14 0 1 1 0 28.500A14 14 0 0 1 15 1ZM22 26V33.500L16 28Z" fill="#e2fdff" />
            <path d="M8 7.800h7M4.500 13.300H15M4.500 18.800H15" stroke="#228be6" strokeWidth="2.600" strokeLinecap="round" />
          </svg>
        </button>
        <button aria-label="Hide chat" className="absolute -top-4 -right-[7px] grid size-5 place-items-center rounded-full bg-[#e4e4e6]">
          <svg viewBox="0 0 10 10" className="size-2.5" stroke="#fff" strokeWidth="1.600" strokeLinecap="round"><path d="m1 1 8 8M9 1 1 9" /></svg>
        </button>
      </div>
    </div>
  );
}
